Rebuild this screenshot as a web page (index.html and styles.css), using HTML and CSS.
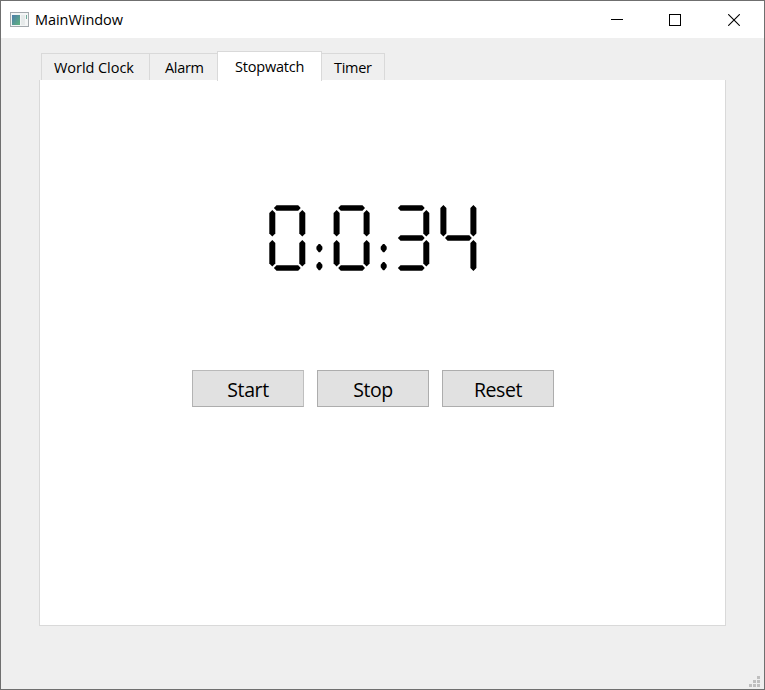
FILE: index.html
```html
<!DOCTYPE html>
<html lang="en">
<head>
<meta charset="utf-8">
<title>MainWindow</title>
<link rel="stylesheet" href="styles.css">
</head>
<body>
<div class="window">
  <header class="titlebar">
    <svg class="app-icon" width="20" height="16" viewBox="0 0 20 16">
      <defs>
        <linearGradient id="pane" x1="0" y1="0" x2="1" y2="1">
          <stop offset="0" stop-color="#4d7cab"/>
          <stop offset="1" stop-color="#60b47e"/>
        </linearGradient>
      </defs>
      <rect x=".5" y=".5" width="18" height="14" fill="#f4f6f6" stroke="#a3a9ad"/>
      <rect x="2" y="3" width="8" height="10" fill="url(#pane)"/>
      <rect x="11" y="3" width="4" height="10" fill="#e6eaea"/>
      <path d="M16 3h1v4h-1z" fill="#6fac9a"/>
    </svg>
    <span class="title">MainWindow</span>
    <div class="controls">
      <svg width="12" height="12"><path d="M0 5.5h12" stroke="#000"/></svg>
      <svg width="12" height="12"><rect x=".5" y=".5" width="11" height="11" fill="none" stroke="#000"/></svg>
      <svg width="12" height="12"><path d="M.2.2l11.6 11.6M11.8.2L.2 11.8" stroke="#000" stroke-width="1.1"/></svg>
    </div>
  </header>
  <main class="client">
    <nav class="tabs">
      <div class="tab world"><span>World Clock</span></div>
      <div class="tab alarm"><span>Alarm</span></div>
      <div class="tab selected"><span>Stopwatch</span></div>
      <div class="tab timer"><span>Timer</span></div>
    </nav>
    <section class="panel">
      <svg class="lcd" width="208" height="66" viewBox="0 0 208 66">
        <defs>
          <path id="h" d="M4.900 3L7.500.2h21.700L31.700 3l-2.500 2.800H7.500z"/>
          <path id="v" d="M3.300 4.900L6.300 8v20.500L3.300 31.500.3 28.500V8z"/>
          <path id="dots" d="M49.700 39h1.400l2.300 2.800v2.500l-2.300 2.900h-1.400l-2.300-2.900v-2.500zM49.700 57h1.400l2.300 2.800v2.500l-2.300 2.900h-1.400l-2.300-2.900v-2.500z"/>
          <g id="zero">
            <use href="#h"/><use href="#h" y="60"/>
            <use href="#v"/><use href="#v" y="30"/>
            <use href="#v" x="30"/><use href="#v" x="30" y="30"/>
          </g>
        </defs>
        <use href="#zero"/>
        <use href="#dots"/>
        <use href="#zero" x="64.300"/>
        <use href="#dots" x="64.300"/>
        <g transform="translate(124)">
          <use href="#h"/><use href="#h" y="30"/><use href="#h" y="60"/>
          <use href="#v" x="30"/><use href="#v" x="30" y="30"/>
        </g>
        <g transform="translate(171.100)">
          <path d="M3.300 0L6.300 3v25.500L3.300 31.500.3 28.500V3zM33.300 0l3 3v25.500l-3 3-3-3V3zM33.300 34.900l3 3.100V63l-3 3-3-3V38z"/>
          <use href="#h" y="30"/>
        </g>
      </svg>
      <div class="actions">
        <button class="start"><span>Start</span></button>
        <button><span>Stop</span></button>
        <button><span>Reset</span></button>
      </div>
    </section>
    <svg class="grip" width="11" height="11" fill="#bfbfbf">
      <path d="M8 0h3v3H8zM4 4h3v3H4zM8 4h3v3H8zM0 8h3v3H0zM4 8h3v3H4zM8 8h3v3H8z"/>
    </svg>
  </main>
</div>
</body>
</html>
```

FILE: styles.css
```css
* { box-sizing: border-box; }
body {
  margin: 0;
  font-family: "Open Sans", "Noto Sans", sans-serif;
  color: #000;
}
svg { display: block; }
.window {
  width: 765px;
  height: 690px;
  border: 1px solid #6f6f6f;
  background: #efefef;
  display: flex;
  flex-direction: column;
}
.titlebar {
  height: 37px;
  flex: none;
  display: flex;
  align-items: center;
  padding: 0 24px 0 9px;
  background: #fff;
}
.title {
  margin-left: 5px;
  font-size: 14.500px;
  letter-spacing: -0.05px;
}
.controls {
  margin-left: auto;
  display: flex;
}
.controls svg + svg { margin-left: 46px; }
.controls svg:last-child { margin-left: 47px; }
.client {
  flex: 1;
  display: flex;
  flex-direction: column;
  padding: 13px 4px 2px 38px;
}
.tabs {
  height: 29px;
  flex: none;
  display: flex;
  align-items: flex-start;
  padding-left: 2px;
}
.tab {
  height: 27px;
  margin-top: 2px;
  border-top: 1px solid #d9d9d9;
  border-left: 1px solid #d9d9d9;
  font-size: 14.500px;
  letter-spacing: -0.3px;
  line-height: 27px;
  white-space: nowrap;
}
.world { width: 108px; padding-left: 12px; letter-spacing: -0.05px; }
.alarm { width: 68px; padding-left: 15px; }
.timer {
  width: 63px;
  padding-left: 12px;
  border-left: 0;
  border-right: 1px solid #d9d9d9;
}
.selected {
  width: 105px;
  height: 30px;
  margin-top: 0;
  padding-left: 17px;
  border-right: 1px solid #d9d9d9;
  background: #fff;
  line-height: 29px;
  letter-spacing: -0.2px;
  position: relative;
}
.panel {
  width: 687px;
  height: 546px;
  flex: none;
  border: 1px solid #d9d9d9;
  border-top: 0;
  background: #fff;
}
.lcd { margin: 125px 0 0 229px; }
.actions {
  display: flex;
  gap: 13px;
  margin: 99px 0 0 152px;
}
button {
  width: 112px;
  height: 37px;
  padding: 2px 0 0;
  border: 1px solid #adadad;
  background: #e1e1e1;
  color: #000;
  font: 19.500px "Open Sans", "Noto Sans", sans-serif;
  letter-spacing: -0.4px;
}
.start { border-color: #b9b9b9 #bfbfbf #adadad #b3b3b3; }
.grip { margin: auto 0 0 auto; }
```
